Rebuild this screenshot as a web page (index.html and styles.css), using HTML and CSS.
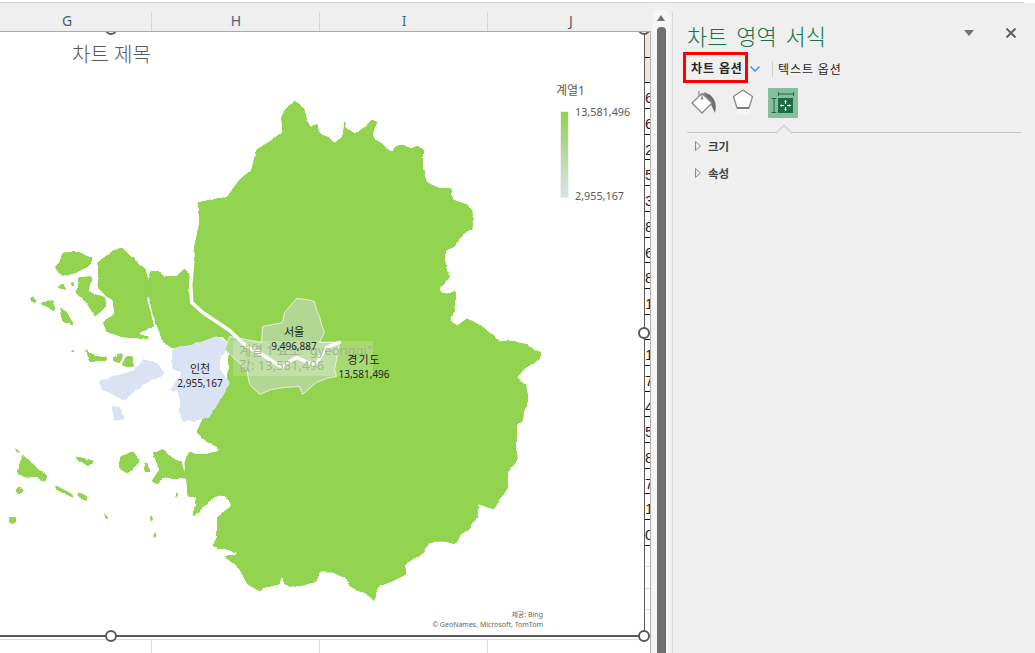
FILE: index.html
```html
<!DOCTYPE html>
<html lang="ko">
<head>
  <meta charset="UTF-8">
  <title>차트 영역 서식</title>
  <link rel="stylesheet" href="styles.css">
</head>
<body>

<div class="topbar"></div>

<div class="main">
  <div class="sheet">
    <div class="col-head">
      <div class="col col-g">G</div>
      <div class="col col-h">H</div>
      <div class="col col-i">I</div>
      <div class="col col-j">J</div>
    </div>

    <div class="grid-body">
      <div class="chart-col">
        <div class="chart">
          <div class="chart-title">차트 제목</div>

          <svg class="map" viewBox="0 32 645 604" width="644" height="603">
            <defs>
              <!-- 해안선을 둥글고 거칠게 -->
              <filter id="coast" x="-5%" y="-5%" width="110%" height="110%">
                <feGaussianBlur in="SourceGraphic" stdDeviation="0.8" result="soft"/>
                <feComponentTransfer in="soft" result="sharp">
                  <feFuncA type="linear" slope="6" intercept="-2.500"/>
                </feComponentTransfer>
                <feTurbulence type="fractalNoise" baseFrequency="0.13" numOctaves="2" seed="4" result="noise"/>
                <feDisplacementMap in="sharp" in2="noise" scale="3" xChannelSelector="R" yChannelSelector="G"/>
              </filter>
            </defs>
            <g class="land">
              <!-- 경기도 본토 -->
              <path d="M295 102 L302 107 L305 112 L307 117 L308 124 L310 128 L317 124 L319 131 L322 135 L330 138 L335 144 L344 135 L345 119 L347 128 L355 134 L362 130 L368 125 L372 120 L378 122 L375 128 L373 135 L376 141 L383 144 L388 150 L392 154 L396 147 L402 145 L412 149 L418 146 L423 150 L423 168 L427 182 L437 188 L452 189 L453 200 L468 205 L473 213 L473 228 L463 235 L455 247 L447 250 L445 257 L447 270 L450 278 L440 290 L443 294 L457 292 L454 313 L451 321 L457 327 L468 319 L483 327 L500 342 L513 342 L527 345 L542 354 L540 360 L530 365 L517 377 L527 387 L529 400 L523 422 L517 425 L518 460 L510 470 L508 490 L500 500 L495 510 L478 504 L478 517 L470 530 L460 537 L457 545 L445 542 L430 542 L425 553 L405 565 L407 575 L393 582 L378 588 L375 602 L370 597 L352 588 L348 580 L333 573 L320 573 L317 582 L297 588 L285 585 L282 573 L280 585 L267 588 L260 592 L248 585 L240 570 L225 557 L243 555 L227 550 L213 547 L218 537 L218 517 L232 507 L227 496 L213 498 L193 518 L197 498 L188 497 L187 480 L185 463 L190 452 L195 455 L207 455 L223 450 L208 443 L197 433 L203 420 L210 417 L227 390 L230 345 L207 318 L190 303 L195 263 L194 252 L200 222 L198 203 L217 199 L227 198 L240 180 L252 170 L257 150 L270 142 L283 132 L282 117 L287 108 Z"/>
              <!-- 김포 -->
              <path d="M150 272 L158 272 L165 277 L177 277 L185 269 L190 277 L188 303 L204 318 L230 337 L217 337 L195 345 L173 349 L163 342 L153 313 L148 290 Z"/>
              <!-- 강화 -->
              <path d="M99 262 L112 252 L122 248 L132 258 L146 270 L148 288 L147 300 L154 327 L135 335 L147 336 L149 340 L143 339 L120 337 L107 332 L103 322 L115 315 L113 300 L107 297 L98 288 Z"/>
              <path d="M63 253 L80 253 L93 259 L88 267 L75 273 L63 277 L55 268 L60 262 Z"/>
              <path d="M78 278 L92 277 L88 292 L105 298 L106 307 L95 317 L88 305 L75 292 L80 288 Z"/>
              <path d="M57 288 L63 284 L67 290 Z"/>
              <path d="M70 283 L74 283 L74 288 Z"/>
              <path d="M30 297 L37 301 L32 303 Z"/>
              <path d="M40 304 L52 300 L56 312 L47 307 Z"/>
              <path d="M59 308 L67 313 L74 326 L63 322 Z"/>
              <path d="M85 349 L95 357 L107 358 L107 361 L95 361 L90 363 Z"/>
              <path d="M113 357 L117 357 L117 362 L114 362 Z"/>
              <path d="M118 355 L123 354 L121 362 L118 362 Z"/>
              <path d="M127 356 L133 356 L133 367 L128 367 L122 366 Z"/>
              <path d="M70 349 L75 353 L72 353 Z"/>
              <!-- 남쪽 섬들 -->
              <path d="M14 448 L21 453 L17 453 Z"/>
              <path d="M23 455 L40 472 L47 476 L45 483 L38 477 L25 478 L17 473 Z"/>
              <path d="M20 487 L24 492 L18 495 L16 490 Z"/>
              <path d="M75 457 L95 462 L90 466 L80 463 Z"/>
              <path d="M121 458 L133 452 L140 462 L128 474 L119 469 Z"/>
              <path d="M145 463 L151 472 L145 473 Z"/>
              <path d="M153 453 L163 451 L177 462 L181 460 L185 478 L174 480 L163 477 L158 485 L152 482 L160 470 Z"/>
              <path d="M55 486 L72 495 L75 499 L56 490 Z"/>
              <path d="M78 493 L87 497 L87 502 L78 497 Z"/>
              <path d="M175 494 L179 494 L176 499 Z"/>
              <path d="M9 518 L16 518 L16 523 L10 525 Z"/>
              <path d="M103 516 L107 516 L107 521 Z"/>
              <path d="M150 517 L153 517 L152 524 Z"/>
              <path d="M154 533 L157 537 L154 539 Z"/>
            </g>

            <g class="incheon">
              <path d="M173 349 L195 345 L217 337 L230 345 L220 360 L220 370 L230 383 L227 390 L210 417 L196 421 L183 422 L178 410 L182 405 L178 393 L180 387 L173 393 L170 390 L183 372 L173 370 Z"/>
              <path d="M99 382 L113 377 L133 372 L143 360 L157 363 L165 375 L147 383 L137 390 L123 401 L110 393 L102 390 Z"/>
              <path d="M112 407 L120 408 L124 420 L115 421 Z"/>
            </g>

            <path class="seoul" d="M297 299 L308 300 L315 302 L317 310 L320 317 L322 325 L325 333 L320 343 L340 343 L337 360 L335 370 L337 377 L327 379 L317 383 L303 395 L300 387 L285 388 L272 390 L260 395 L250 385 L247 370 L225 350 L230 337 L262 343 L263 327 L283 323 L285 313 Z"/>
            <path class="river" d="M193 262 L191 285 L192 303 L203 313 L230 331 L247 347 L258 352 L270 360 L283 368 L290 362 L297 358 L308 363 L317 365 L322 355 L327 348 L340 343"/>
          </svg>

          <div class="map-tip">
            <div>계열 1 요소 "gyeonggi"</div>
            <div>값: 13,581,496</div>
          </div>

          <div class="pin pin-seoul"><div class="pin-name">서울</div><div>9,496,887</div></div>
          <div class="pin pin-gyeonggi"><div class="pin-name">경기도</div><div>13,581,496</div></div>
          <div class="pin pin-incheon"><div class="pin-name">인천</div><div>2,955,167</div></div>

          <div class="legend">
            <div class="legend-title">계열1</div>
            <div class="legend-body">
              <div class="legend-bar"></div>
              <div class="legend-labels">
                <span>13,581,496</span>
                <span>2,955,167</span>
              </div>
            </div>
          </div>

          <div class="credit">
            <div>제공: Bing</div>
            <div>© GeoNames, Microsoft, TomTom</div>
          </div>

          <span class="handle h-top-mid"></span>
          <span class="handle h-top-right"></span>
          <span class="handle h-mid-right"></span>
          <span class="handle h-bot-mid"></span>
          <span class="handle h-bot-right"></span>
        </div>

        <div class="below">
          <div class="below-cell c1"></div>
          <div class="below-cell c2"></div>
          <div class="below-cell c3"></div>
        </div>
      </div>

      <div class="strip">
        <div class="cell beige"></div>
        <div class="cell beige"></div>
        <div class="cell">6</div>
        <div class="cell">6</div>
        <div class="cell">2</div>
        <div class="cell">5</div>
        <div class="cell">3</div>
        <div class="cell">8</div>
        <div class="cell">6</div>
        <div class="cell">8</div>
        <div class="cell">1</div>
        <div class="cell"></div>
        <div class="cell">1</div>
        <div class="cell">7</div>
        <div class="cell">4</div>
        <div class="cell">5</div>
        <div class="cell">8</div>
        <div class="cell">7</div>
        <div class="cell">1</div>
        <div class="cell">0</div>
        <div class="cell blank"></div>
        <div class="cell blank"></div>
        <div class="cell blank"></div>
      </div>
    </div>
  </div>

  <div class="scroll">
    <div class="track">
      <div class="arrow-up"></div>
      <div class="thumb"></div>
    </div>
  </div>

  <div class="pane">
    <div class="pane-head">
      <div class="pane-title">차트 영역 서식</div>
      <div class="pane-caret"></div>
      <svg class="pane-close" viewBox="0 0 10 10" width="10" height="10">
        <path d="M0.500 0.500 L9.500 9.500 M9.500 0.500 L0.500 9.500"/>
      </svg>
    </div>

    <div class="tabs">
      <div class="tab-active">차트 옵션</div>
      <svg class="tab-chevron" viewBox="0 0 10 6" width="10" height="6">
        <path d="M0.500 0.500 L5 5 L9.500 0.500"/>
      </svg>
      <div class="tab-sep"></div>
      <div class="tab-other">텍스트 옵션</div>
    </div>

    <div class="icons">
      <svg class="icon icon-fill" viewBox="0 0 26 26" width="26" height="26">
        <path class="ic-drip" d="M12 1 C17 1 20 3 22 6 C24 9 26 13 24 21 C22 17 21 14 19 11 Z"/>
        <path class="ic-shape" d="M1 11 L11 1.500 L21 11 L11 21 Z"/>
        <path class="ic-line" d="M8 4 L8 -1 M14 4 L14 0"/>
        <path class="ic-line" d="M11 1.500 L11 6"/>
        <circle class="ic-dot" cx="11" cy="6.500" r="1.300"/>
      </svg>

      <svg class="icon icon-shape" viewBox="0 0 22 28" width="22" height="28">
        <defs>
          <linearGradient id="fade" x1="0" y1="0" x2="0" y2="1">
            <stop offset="0" stop-color="#ffffff"/>
            <stop offset="1" stop-color="#efefef"/>
          </linearGradient>
        </defs>
        <path class="ic-shape" d="M11 1 L20.500 7.500 L17 19 L5 19 L1.500 7.500 Z"/>
        <path class="ic-bar" d="M5 19 L17 19"/>
        <path d="M5 20 L17 20 L18 27 L4 27 Z" fill="url(#fade)"/>
      </svg>

      <div class="icon-active">
        <svg viewBox="0 0 30 30" width="30" height="30">
          <path class="ic-green" d="M10.500 4 L10.500 8 M10.500 6 L25.500 6 M25.500 4 L25.500 8 M3.500 10.500 L8.500 10.500 M6 10.500 L6 24.500 M3.500 24.500 L8.500 24.500"/>
          <rect class="ic-box" x="10" y="10" width="15" height="15"/>
          <path class="ic-move" d="M17.500 12.500 L17.500 16 M17.500 19 L17.500 22.500 M12.500 17.500 L16 17.500 M19 17.500 L22.500 17.500"/>
          <path class="ic-head" d="M17.500 12 L19 14 L16 14 Z M17.500 23 L19 21 L16 21 Z M12 17.500 L14 16 L14 19 Z M23 17.500 L21 16 L21 19 Z"/>
        </svg>
      </div>
    </div>

    <div class="divider"></div>

    <div class="sections">
      <div class="section">
        <svg class="tri" viewBox="0 0 6 10" width="6" height="10"><path d="M0.500 0.500 L5.500 5 L0.500 9.500 Z"/></svg>
        <span>크기</span>
      </div>
      <div class="section">
        <svg class="tri" viewBox="0 0 6 10" width="6" height="10"><path d="M0.500 0.500 L5.500 5 L0.500 9.500 Z"/></svg>
        <span>속성</span>
      </div>
    </div>
  </div>
</div>

</body>
</html>
```

FILE: styles.css
```css
* {
  box-sizing: border-box;
}
html, body {
  margin: 0;
  height: 653px;
  overflow: hidden;
}
body {
  font-family: "Noto Sans", "Noto Sans CJK KR", sans-serif;
  background: #ffffff;
}
.topbar {
  height: 3px;
  width: 1024px;
  border-bottom: 1px solid #d4d4d4;
}
.main {
  display: flex;
  height: 650px;
}

/* sheet */
.sheet {
  width: 651px;
  display: flex;
  flex-direction: column;
}
.col-head {
  display: flex;
  height: 29px;
  background: #efefef;
  border-bottom: 1px solid #a9a9a9;
  font-size: 14px;
  line-height: 35px;
  text-align: center;
}
.col {
  position: relative;
}
.col-g {
  width: 152px;
  padding-right: 18px;
  color: #4d5a66;
}
.col-h {
  width: 168px;
  color: #3f6485;
}
.col-i {
  width: 168px;
  color: #2b73b0;
}
.col-j {
  flex: 1;
  padding-left: 3px;
  color: #4d5a66;
}
.col-g::after, .col-h::after, .col-i::after {
  content: "";
  position: absolute;
  right: 0;
  top: 9px;
  bottom: 0;
  width: 1px;
  background: #d6d6d6;
}
.grid-body {
  flex: 1;
  display: flex;
  overflow: hidden;
}
.chart-col {
  width: 645px;
  display: flex;
  flex-direction: column;
}
.chart {
  position: relative;
  height: 605px;
  width: 645px;
  background: #ffffff;
  border-right: 1px solid #595959;
  border-bottom: 2px solid #595959;
}
.chart-title {
  position: absolute;
  left: 72px;
  top: 8px;
  font-size: 20px;
  line-height: 30px;
  color: #595959;
  font-weight: 300;
}
.map {
  display: block;
}
.land, .incheon {
  filter: url(#coast);
}
.land path {
  fill: #92d350;
  stroke: #92d350;
  stroke-width: 0.800;
  stroke-linejoin: round;
}
.incheon path {
  fill: #dae3f3;
  stroke: #dae3f3;
  stroke-width: 0.800;
  stroke-linejoin: round;
}
.seoul {
  fill: #b2d792;
  stroke: #e6f2da;
  stroke-width: 1;
  stroke-linejoin: round;
}
.river {
  fill: none;
  stroke: #ffffff;
  stroke-width: 3.500;
  stroke-linejoin: round;
  stroke-linecap: round;
}
.map-tip {
  position: absolute;
  left: 233px;
  top: 309px;
  width: 140px;
  height: 35px;
  padding: 2px 0 0 6px;
  background: rgba(255, 255, 255, 0.2);
  color: #9fb58d;
  font-size: 13px;
  line-height: 15px;
  white-space: nowrap;
  overflow: hidden;
}
.pin {
  position: absolute;
  width: 80px;
  text-align: center;
  font-size: 10px;
  line-height: 14px;
  color: #222222;
}
.pin-name {
  font-size: 11px;
}
.pin-seoul {
  left: 254px;
  top: 293px;
}
.pin-gyeonggi {
  left: 324px;
  top: 321px;
}
.pin-incheon {
  left: 160px;
  top: 330px;
}
.pin-gyeonggi .pin-name {
  letter-spacing: 1px;
}
.legend {
  position: absolute;
  left: 556px;
  top: 50px;
  color: #595959;
  font-size: 12px;
}
.legend-title {
  line-height: 18px;
}
.legend-body {
  display: flex;
  margin-top: 11px;
  margin-left: 4px;
}
.legend-bar {
  width: 9px;
  height: 87px;
  background: linear-gradient(#92d050, #dae3f3);
  border: 1px solid #edf3e6;
}
.legend-labels {
  display: flex;
  flex-direction: column;
  justify-content: space-between;
  height: 100px;
  margin-top: -7px;
  margin-left: 6px;
  font-size: 10.800px;
  line-height: 16px;
}
.credit {
  position: absolute;
  right: 101px;
  top: 578px;
  text-align: right;
  font-size: 7px;
  line-height: 10px;
  color: #666666;
}
.handle {
  position: absolute;
  width: 12px;
  height: 12px;
  border: 2px solid #595959;
  border-radius: 50%;
  background: #ffffff;
}
.h-top-mid {
  left: 105px;
  top: -9px;
}
.h-top-right {
  left: 638px;
  top: -9px;
}
.h-mid-right {
  left: 638px;
  top: 295px;
}
.h-bot-mid {
  left: 105px;
  top: 598px;
}
.h-bot-right {
  left: 638px;
  top: 598px;
}
.below {
  flex: 1;
  display: flex;
  margin-top: 2px;
  border-top: 1px solid #dcdcdc;
}
.below-cell {
  border-right: 1px solid #dcdcdc;
}
.c1 {
  width: 152px;
}
.c2, .c3 {
  width: 168px;
}

/* clipped cells right of the chart */
.strip {
  width: 6px;
  border-right: 1px solid #b5b5b5;
  font-family: "Liberation Sans", sans-serif;
}
.cell {
  height: 25.700px;
  border-bottom: 1px solid #111111;
  font-size: 15px;
  line-height: 29px;
  color: #222222;
  overflow: hidden;
}
.beige {
  background: #efe8d6;
}
.blank {
  height: 21.500px;
  border-bottom-color: #dcdcdc;
}

/* scrollbar */
.scroll {
  width: 21px;
  background: #f0f0f0;
}
.track {
  position: relative;
  height: 100%;
  width: 17px;
  margin-left: 2px;
  margin-top: 7px;
  background: #f6f6f6;
  border-radius: 6px 6px 0 0;
}
.arrow-up {
  position: absolute;
  left: 4px;
  top: 5px;
  border-left: 4.500px solid transparent;
  border-right: 4.500px solid transparent;
  border-bottom: 6px solid #707070;
}
.thumb {
  position: absolute;
  left: 4px;
  top: 17px;
  bottom: 0;
  width: 9px;
  background: #707070;
  border-radius: 4px 4px 0 0;
}

/* format pane */
.pane {
  position: relative;
  flex: 1;
  background: #efefef;
  padding: 0 14px 0 15px;
}
.pane::before {
  content: "";
  position: absolute;
  left: 0;
  top: 9px;
  bottom: 0;
  width: 1px;
  background: #d8d8d8;
}
.pane-head {
  display: flex;
  align-items: center;
  height: 49px;
  padding-top: 17px;
}
.pane-title {
  flex: 1;
  font-size: 22px;
  line-height: 32px;
  color: #17704c;
  font-weight: 300;
  word-spacing: 3px;
}
.pane-caret {
  width: 0;
  border-left: 5px solid transparent;
  border-right: 5px solid transparent;
  border-top: 6px solid #707070;
  margin-right: 32px;
  margin-top: -6px;
}
.pane-close {
  margin-right: 5px;
  margin-top: -6px;
}
.pane-close path {
  stroke: #606060;
  stroke-width: 2;
  fill: none;
}
.tabs {
  display: flex;
  align-items: center;
  height: 31px;
  margin-left: -4px;
  font-size: 12px;
  letter-spacing: 0.900px;
  color: #262626;
  padding-top: 2px;
}
.tab-active {
  height: 31px;
  width: 65px;
  margin-top: -2px;
  border: 3px solid #ff0000;
  padding-left: 5px;
  line-height: 28px;
  font-weight: 700;
  white-space: nowrap;
}
.tab-chevron {
  margin-left: 2px;
}
.tab-chevron path {
  stroke: #3f8fd0;
  stroke-width: 1.300;
  fill: none;
}
.tab-sep {
  width: 1px;
  height: 16px;
  background: #d0d0d0;
  margin-left: 12px;
}
.tab-other {
  margin-left: 5px;
  white-space: nowrap;
}
.icons {
  display: flex;
  align-items: center;
  height: 30px;
  margin-top: 5px;
  padding-left: 4px;
}
.icon {
  overflow: visible;
}
.icon-fill {
  width: 26px;
  margin-right: 15px;
  margin-top: 3px;
}
.icon-shape {
  margin-right: 14px;
}
.icon-active {
  width: 30px;
  height: 30px;
  background: #86bf9c;
}
.icon-active svg {
  display: block;
}
.ic-shape {
  fill: #ffffff;
  stroke: #8a8a8a;
  stroke-width: 1.300;
  stroke-linejoin: round;
}
.ic-drip {
  fill: #6f6f6f;
}
.ic-line {
  fill: none;
  stroke: #8a8a8a;
  stroke-width: 1.200;
}
.ic-dot {
  fill: #8a8a8a;
}
.ic-bar {
  stroke: #7a7a7a;
  stroke-width: 2;
}
.ic-green {
  fill: none;
  stroke: #1f6b45;
  stroke-width: 1;
}
.ic-box {
  fill: #1f6b45;
}
.ic-move {
  stroke: #ffffff;
  stroke-width: 1;
}
.ic-head {
  fill: #ffffff;
}
.divider {
  position: relative;
  height: 1px;
  margin-top: 14px;
  background: #c8c8c8;
}
.divider::after {
  content: "";
  position: absolute;
  left: 91px;
  top: -5px;
  width: 11px;
  height: 11px;
  background: #efefef;
  border-top: 1px solid #c8c8c8;
  border-left: 1px solid #c8c8c8;
  transform: rotate(45deg);
}
.sections {
  margin-top: -1px;
}
.section {
  display: flex;
  align-items: center;
  height: 27px;
  padding-left: 8px;
  font-size: 11.500px;
  font-weight: 700;
  color: #444444;
}
.tri {
  margin-right: 7px;
}
.tri path {
  fill: none;
  stroke: #8a8a8a;
  stroke-width: 1;
}
```
